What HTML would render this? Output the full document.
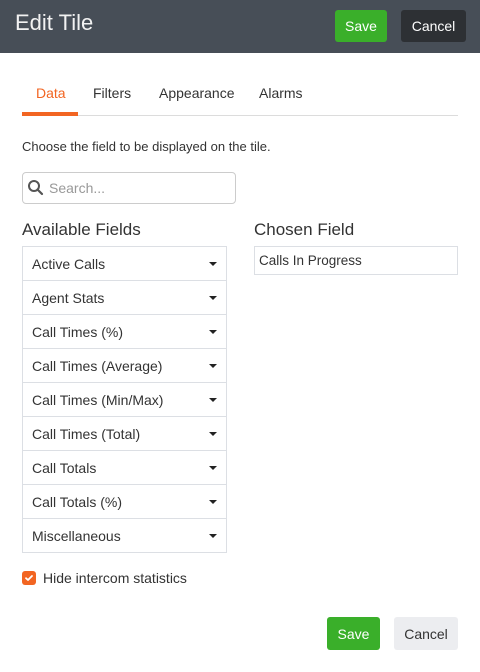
<!DOCTYPE html>
<html><head><meta charset="utf-8"><style>
*{box-sizing:border-box;margin:0;padding:0}
body{width:480px;height:672px;background:#fff;font-family:"Liberation Sans",sans-serif;color:#333;position:relative;overflow:hidden}
.a{position:absolute}
.hdr{left:0;top:0;width:480px;height:53px;background:#474e57}
.btn{position:absolute;border-radius:3px;font-size:14px;display:flex;align-items:center;justify-content:center}
.row{position:absolute;left:22px;width:205px;height:35px;border:1px solid #dcdfe4;font-size:14px;color:#333;padding-left:9px;display:flex;align-items:center}
.row::after{content:"";position:absolute;right:9px;top:15px;border-left:4px solid transparent;border-right:4px solid transparent;border-top:4px solid #222}
</style></head><body>
<div class="a hdr"></div>
<div class="a" style="left:15px;top:10px;font-size:22px;color:#f2f2f2">Edit Tile</div>
<div class="btn" style="left:335px;top:10px;width:52px;height:32px;background:#3aaf2a;color:#fff">Save</div>
<div class="btn" style="left:401px;top:10px;width:65px;height:32px;background:#2d3034;color:#fff">Cancel</div>

<div class="a" style="left:36px;top:85px;font-size:14px;color:#f26522">Data</div>
<div class="a" style="left:93px;top:85px;font-size:14px;color:#333">Filters</div>
<div class="a" style="left:159px;top:85px;font-size:14px;color:#333">Appearance</div>
<div class="a" style="left:259px;top:85px;font-size:14px;color:#333">Alarms</div>
<div class="a" style="left:22px;top:115px;width:436px;height:1px;background:#dcdcdc"></div>
<div class="a" style="left:22px;top:112px;width:56px;height:4px;background:#f26522"></div>

<div class="a" style="left:22px;top:139px;font-size:13px;color:#333">Choose the field to be displayed on the tile.</div>
<div class="a" style="left:22px;top:172px;width:214px;height:32px;border:1px solid #ccc;border-radius:4px"></div>
<svg class="a" style="left:27px;top:179px" width="18" height="18" viewBox="0 0 18 18"><circle cx="7" cy="7" r="5" fill="none" stroke="#555" stroke-width="2"/><line x1="10.5" y1="10.5" x2="15" y2="15" stroke="#555" stroke-width="2.2" stroke-linecap="round"/></svg>
<div class="a" style="left:49px;top:180px;font-size:14px;color:#999">Search...</div>

<div class="a" style="left:22px;top:220px;font-size:17px;color:#333">Available Fields</div>
<div class="a" style="left:254px;top:220px;font-size:17px;color:#333">Chosen Field</div>

<div class="row" style="top:246px">Active Calls</div>
<div class="row" style="top:280px">Agent Stats</div>
<div class="row" style="top:314px">Call Times (%)</div>
<div class="row" style="top:348px">Call Times (Average)</div>
<div class="row" style="top:382px">Call Times (Min/Max)</div>
<div class="row" style="top:416px">Call Times (Total)</div>
<div class="row" style="top:450px">Call Totals</div>
<div class="row" style="top:484px">Call Totals (%)</div>
<div class="row" style="top:518px">Miscellaneous</div>

<div class="a" style="left:254px;top:246px;width:204px;height:29px;border:1px solid #dcdfe4;font-size:13.5px;padding:6px 0 0 4px">Calls In Progress</div>

<div class="a" style="left:22px;top:571px;width:14px;height:14px;border-radius:3px;background:#f26522"></div>
<svg class="a" style="left:22px;top:571px" width="14" height="14" viewBox="0 0 14 14"><path d="M4 7.2 L6 9 L10 5" fill="none" stroke="#fff" stroke-width="1.8" stroke-linecap="round" stroke-linejoin="round"/></svg>
<div class="a" style="left:43px;top:570px;font-size:14px;color:#333">Hide intercom statistics</div>

<div class="btn" style="left:327px;top:617px;width:53px;height:33px;background:#3aaf2a;color:#fff">Save</div>
<div class="btn" style="left:394px;top:617px;width:64px;height:33px;background:#ecedf0;color:#333">Cancel</div>
</body></html>
